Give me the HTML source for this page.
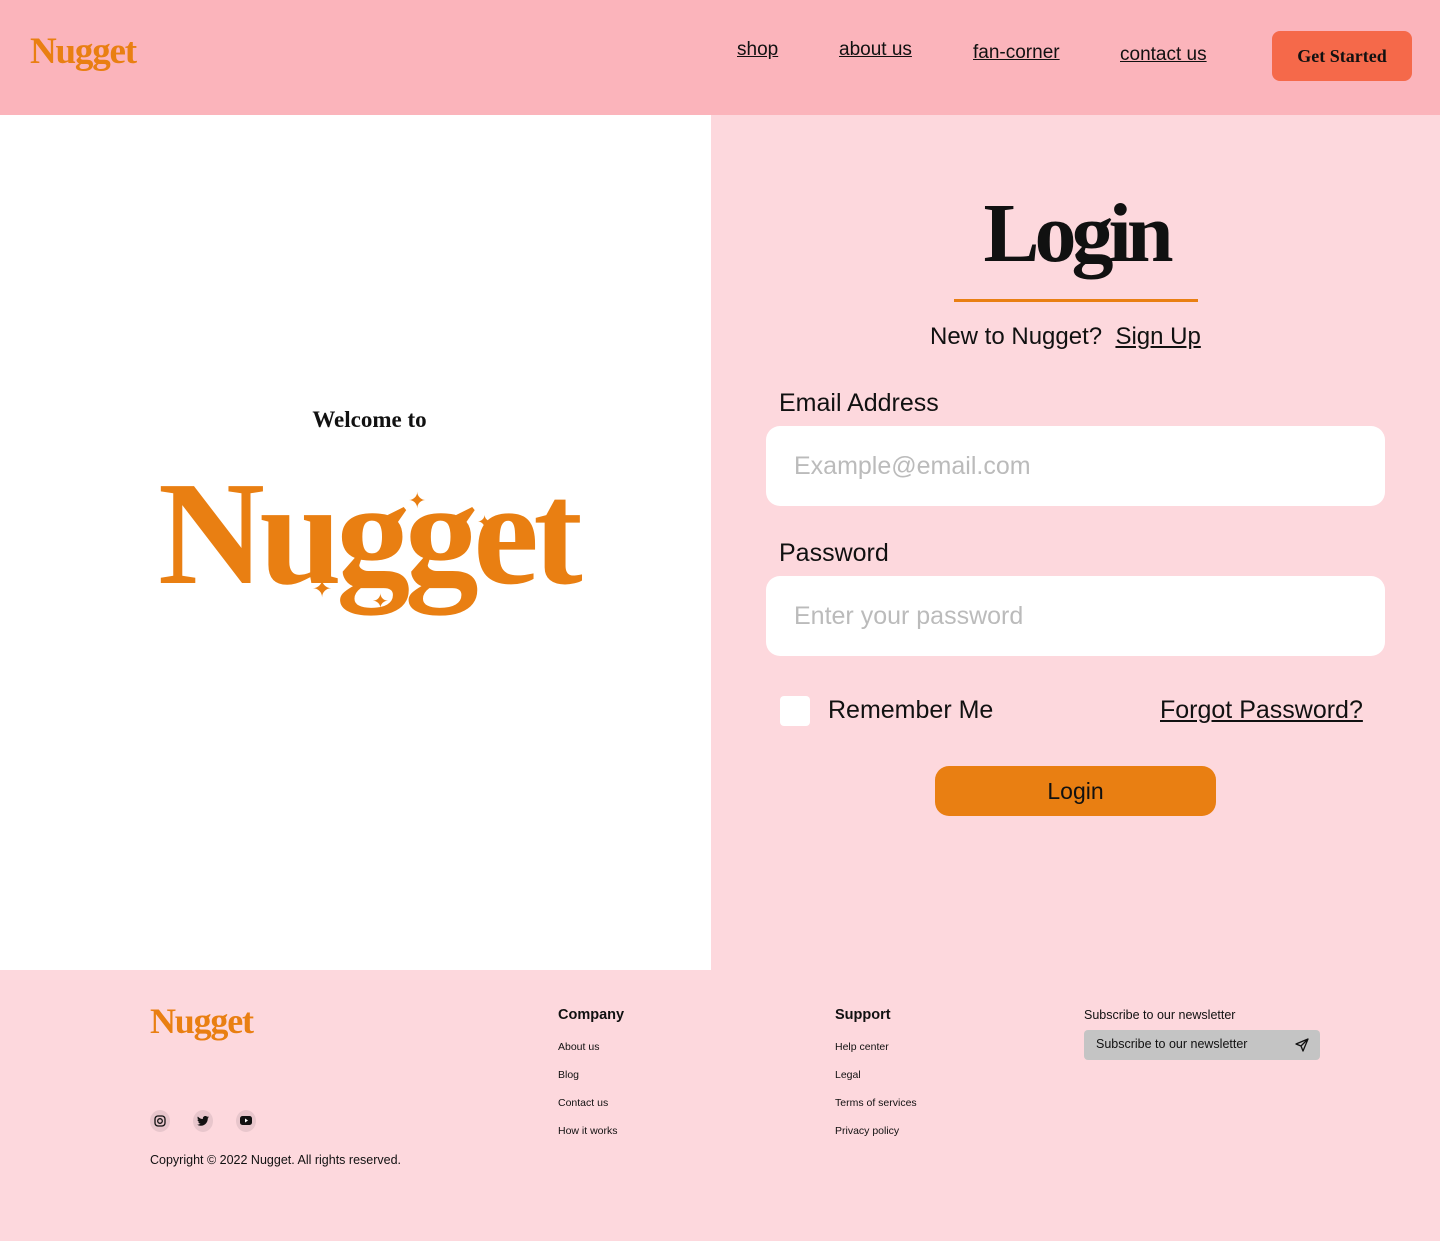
<!DOCTYPE html>
<html><head><style>
*{margin:0;padding:0;box-sizing:border-box}
body{width:1440px;height:1241px;position:relative;font-family:"Liberation Sans",sans-serif;background:#fdd8dd;overflow:hidden}
.a{position:absolute}
.serif{font-family:"Liberation Serif",serif;font-weight:bold}
header{position:absolute;left:0;top:0;width:1440px;height:115px;background:#fbb4bb}
.nav{position:absolute;font-size:19px;color:#111;text-decoration:underline}
.left{position:absolute;left:0;top:115px;width:711px;height:855px;background:#fff}
.inp{position:absolute;left:766px;width:619px;height:80px;background:#fff;border-radius:14px;font-size:25px;color:#bbb;padding:26px 28px}
.lbl{position:absolute;font-size:25px;color:#111}
.fl{position:absolute;font-size:10.5px;color:#111}
.ic{position:absolute;top:1110px;width:20px;height:22px;border-radius:50%;background:#e8c6cc}
</style></head><body>
<header>
<div class="a serif" style="left:30px;top:30px;font-size:37px;color:#e97f12;letter-spacing:-1.2px">Nugget</div>
<div class="nav" style="left:737px;top:39px">shop</div>
<div class="nav" style="left:839px;top:39px">about us</div>
<div class="nav" style="left:973px;top:42px">fan-corner</div>
<div class="nav" style="left:1120px;top:44px">contact us</div>
<div class="a serif" style="left:1272px;top:31px;width:140px;height:50px;background:#f5694a;border-radius:8px;font-size:18px;color:#111;text-align:center;line-height:50px">Get Started</div>
</header>
<div class="left">
<div class="a serif" style="left:0;width:739px;top:292px;text-align:center;font-size:23px;color:#111">Welcome to</div>
<div class="a serif" style="left:158px;top:345px;font-size:148px;color:#e97f12;letter-spacing:-5.5px;line-height:1">Nugget</div>
<div class="a" style="left:408px;top:373px;color:#e97f12;font-size:22px">✦</div>
<div class="a" style="left:477px;top:397px;color:#e97f12;font-size:18px">✦</div>
<div class="a" style="left:312px;top:460px;color:#e97f12;font-size:24px">✦</div>
<div class="a" style="left:372px;top:474px;color:#e97f12;font-size:20px">✦</div>
</div>
<div class="a serif" style="left:954px;width:244px;top:192px;text-align:center;font-size:84px;color:#111;letter-spacing:-5px;line-height:1">Login</div>
<div class="a" style="left:954px;top:299px;width:244px;height:3px;background:#e97f12"></div>
<div class="a" style="left:930px;top:323px;font-size:24px;color:#111">New to Nugget?&nbsp; <u>Sign Up</u></div>
<div class="lbl" style="left:779px;top:389px">Email Address</div>
<div class="inp" style="top:426px">Example@email.com</div>
<div class="lbl" style="left:779px;top:539px">Password</div>
<div class="inp" style="top:576px">Enter your password</div>
<div class="a" style="left:780px;top:696px;width:30px;height:30px;background:#fff;border-radius:4px"></div>
<div class="lbl" style="left:828px;top:696px">Remember Me</div>
<div class="lbl" style="left:1160px;top:696px;text-decoration:underline">Forgot Password?</div>
<div class="a" style="left:935px;top:766px;width:281px;height:50px;background:#e97f12;border-radius:14px;font-size:23px;color:#111;text-align:center;line-height:50px">Login</div>
<div class="a serif" style="left:150px;top:1000px;font-size:36px;color:#e97f12;letter-spacing:-1.2px">Nugget</div>
<div class="ic" style="left:150px"></div><div class="ic" style="left:193px"></div><div class="ic" style="left:236px"></div>
<svg class="a" style="left:154px;top:1115px" width="12" height="12" viewBox="0 0 12 12"><rect x="1" y="1" width="10" height="10" rx="3" fill="none" stroke="#111" stroke-width="1.3"/><circle cx="6" cy="6" r="2.3" fill="none" stroke="#111" stroke-width="1.3"/></svg>
<svg class="a" style="left:197px;top:1116px" width="12" height="10" viewBox="0 0 24 20"><path d="M24 2.4a10 10 0 0 1-2.8.8A5 5 0 0 0 23.3.4a10 10 0 0 1-3.1 1.2A4.9 4.9 0 0 0 11.8 6 14 14 0 0 1 1.7.9a4.9 4.9 0 0 0 1.5 6.6 4.9 4.9 0 0 1-2.2-.6 4.9 4.9 0 0 0 3.9 4.9 4.9 4.9 0 0 1-2.2.1 4.9 4.9 0 0 0 4.6 3.4A9.9 9.9 0 0 1 0 17.3 14 14 0 0 0 7.5 19.5c9.1 0 14-7.5 14-14v-.6A10 10 0 0 0 24 2.4z" fill="#111"/></svg>
<svg class="a" style="left:240px;top:1116px" width="12" height="10"><rect width="12" height="9" rx="2.5" fill="#111"/><path d="M5 2.5L8 4.5 5 6.5Z" fill="#fff"/></svg>
<div class="a" style="left:150px;top:1153px;font-size:12.5px;color:#111">Copyright © 2022 Nugget. All rights reserved.</div>
<div class="a" style="left:558px;top:1007px;font-size:14.5px;font-weight:bold;color:#111">Company</div>
<div class="fl" style="left:558px;top:1041px">About us</div>
<div class="fl" style="left:558px;top:1069px">Blog</div>
<div class="fl" style="left:558px;top:1097px">Contact us</div>
<div class="fl" style="left:558px;top:1125px">How it works</div>
<div class="a" style="left:835px;top:1007px;font-size:14.5px;font-weight:bold;color:#111">Support</div>
<div class="fl" style="left:835px;top:1041px">Help center</div>
<div class="fl" style="left:835px;top:1069px">Legal</div>
<div class="fl" style="left:835px;top:1097px">Terms of services</div>
<div class="fl" style="left:835px;top:1125px">Privacy policy</div>
<div class="a" style="left:1084px;top:1008px;font-size:12.5px;color:#111">Subscribe to our newsletter</div>
<div class="a" style="left:1084px;top:1030px;width:236px;height:30px;background:#c4c4c4;border-radius:4px;font-size:12.5px;color:#111;padding:7px 12px">Subscribe to our newsletter</div>
<svg class="a" style="left:1295px;top:1038px" width="14" height="14" viewBox="0 0 14 14"><path d="M13 1L1 6l5 2 2 5zM13 1L6 8" fill="none" stroke="#111" stroke-width="1.3" stroke-linejoin="round"/></svg>
</body></html>
